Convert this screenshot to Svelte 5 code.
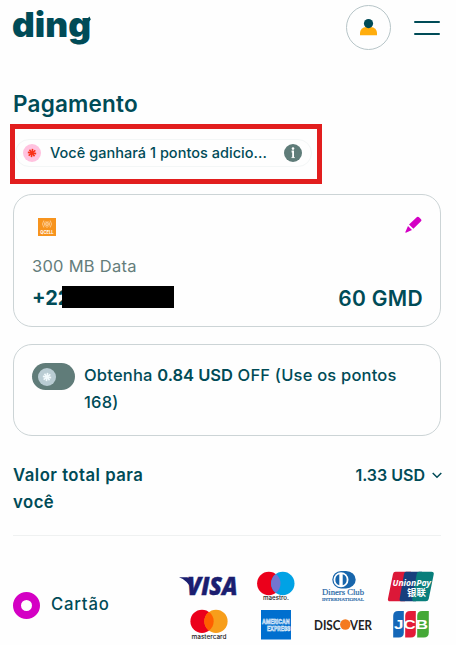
<script>
  const petals = [0, 45, 90, 135];
</script>

<main>
  <header>
    <svg class="logo" width="80" height="44" viewBox="0 0 80 44" role="img" aria-label="ding">
      <text x="-1" y="32" textLength="79" lengthAdjust="spacingAndGlyphs">ding</text>
      <path d="M71 17l5.5-5.5 1.3 3-3.3 4z" />
    </svg>
    <div class="actions">
      <button class="avatar" aria-label="Conta">
        <svg width="17" height="17" viewBox="0 0 17 17">
          <path d="M0 16.3V14a6 6 0 0 1 6-6h5a6 6 0 0 1 6 6v2.3z" fill="#ffad0d" />
          <circle cx="8.5" cy="4.6" r="4.6" fill="#004b57" />
        </svg>
      </button>
      <button class="menu" aria-label="Menu"><i></i><i></i></button>
    </div>
  </header>

  <h1>Pagamento</h1>

  <section class="highlight">
    <div class="pill">
      <svg width="18" height="18" viewBox="-9 -9 18 18">
        <circle r="9" fill="#ffc2df" />
        {#each petals as a}
          <path d="M0-4.2V4.2" stroke="#f83218" stroke-width="1.6" transform="rotate({a + 8})" />
        {/each}
      </svg>
      <span class="earn">Você ganhará 1 pontos adicio...</span>
      <svg class="info" width="18" height="18" viewBox="0 0 18 18">
        <circle cx="9" cy="9" r="9" fill="#5f7c79" />
        <circle cx="9" cy="4.6" r="1.3" fill="#fff" />
        <path d="M7.6 7.5H9.1V13.8" fill="none" stroke="#fff" stroke-width="1.8" />
        <path d="M7.4 13.6h3.5" stroke="#fff" stroke-width=".8" />
      </svg>
    </div>
  </section>

  <section class="card order">
    <div class="row top">
      <svg class="operator" width="18" height="18" viewBox="0 0 18 18">
        <rect width="18" height="18" fill="#f7941e" />
        <g fill="none" stroke="#ffd3a0" stroke-width=".8">
          <circle cx="9" cy="6" r="1.5" />
          <path d="M5.8 2.5q-2.6 3.5 0 7M12.2 2.5q2.6 3.5 0 7M7.3 3.3q-1.8 2.7 0 5.4M10.7 3.3q1.8 2.7 0 5.4M9 3v7" />
        </g>
        <text x="2.3" y="16.3" textLength="13.4" lengthAdjust="spacingAndGlyphs">QCELL</text>
      </svg>
      <svg width="17" height="18" viewBox="0 0 17 18" fill="#d400c4">
        <path d="M12 1.1q1-.9 2 .1l2 2q1 1 0 2L8.4 12.7 4 8.5z" />
        <path d="M3 9.9l4 4L.9 16.8Q.2 17 .4 16z" />
      </svg>
    </div>
    <p class="plan">300 MB Data</p>
    <div class="row amount">
      <span class="phone">+22<b></b></span>
      <span class="price">60 GMD</span>
    </div>
  </section>

  <section class="card points">
    <button class="toggle" aria-label="Usar pontos">
      <svg width="18" height="18" viewBox="-9 -9 18 18">
        <circle r="9" fill="#b9ccd3" />
        {#each petals as a}
          <path d="M0-4.2V4.2" stroke="#f2fafc" stroke-width="1.6" transform="rotate({a + 8})" />
        {/each}
      </svg>
    </button>
    <p>Obtenha <strong>0.84 USD</strong> OFF (Use os pontos 168)</p>
  </section>

  <section class="total">
    <span class="label">Valor total para você</span>
    <span class="sum">1.33 USD
      <svg width="10" height="7" viewBox="0 0 10 7"><path d="M.7 1l4.3 4.2L9.3 1" fill="none" stroke="#004b57" stroke-width="1.5" /></svg>
    </span>
  </section>

  <section class="method">
    <span class="radio"></span>
    <span class="name">Cartão</span>
    <div class="brands">
      <svg width="60" height="34" viewBox="0 0 60 34" role="img" aria-label="Visa">
        <text class="visa" x="8" y="25.2" textLength="50.5" lengthAdjust="spacingAndGlyphs">VISA</text>
        <path d="M0 7.3h8q2.3 0 2.7 2l2.4 10.7Q8 10 0 7.3z" fill="#1b1e70" />
      </svg>
      <svg width="40" height="34" viewBox="0 0 40 34" role="img" aria-label="Maestro">
        <circle cx="12.8" cy="13.5" r="11.7" fill="#eb001b" />
        <circle cx="26.8" cy="13.5" r="11.7" fill="#00a2e5" />
        <path d="M19.8 4.1a11.7 11.7 0 0 1 0 18.8 11.7 11.7 0 0 1 0-18.8z" fill="#7375cf" />
        <text class="mc" x="7" y="30.3" textLength="26" lengthAdjust="spacingAndGlyphs">maestro.</text>
      </svg>
      <svg width="44" height="34" viewBox="0 0 44 34" role="img" aria-label="Diners Club">
        <path d="M20 1h5a9.7 8.7 0 0 1 0 17.4h-5A8.7 8.7 0 0 1 20 1z" fill="#1765ab" />
        <circle cx="20" cy="9.7" r="7.5" fill="#fff" />
        <path d="M18.3 4.2a5.8 5.8 0 0 0 0 11zM21.7 4.2a5.8 5.8 0 0 1 0 11z" fill="#1765ab" />
        <text class="diners" x="1" y="25.4" textLength="42" lengthAdjust="spacingAndGlyphs">Diners Club</text>
        <text class="intl" x="1" y="30.8" textLength="42" lengthAdjust="spacingAndGlyphs">INTERNATIONAL</text>
      </svg>
      <svg width="48" height="34" viewBox="0 0 48 34" role="img" aria-label="UnionPay">
        <path d="M8.5 1.7H24L18 31.2H3Q.3 31.2 1 28.4L6 4q.5-2.3 2.5-2.3z" fill="#dc1838" />
        <path d="M19 1.7h16L29 31.2H14.5q-2.3 0-1.8-2.8L17 4q.5-2.3 2-2.3z" fill="#173f7d" />
        <path d="M32 1.7h12.5q2.8 0 2.2 2.8l-5 24.4q-.5 2.3-3 2.3H27q-2.3 0-1.8-2.8L29.7 4q.5-2.3 2.3-2.3z" fill="#087e7b" />
        <text class="union" x="5.5" y="16" textLength="38.5" lengthAdjust="spacingAndGlyphs">UnionPay</text>
        <text class="cjk" x="20" y="26.2" textLength="19" lengthAdjust="spacingAndGlyphs">银联</text>
      </svg>
      <svg width="40" height="34" viewBox="0 0 40 34" role="img" aria-label="Mastercard">
        <circle cx="13" cy="13.3" r="11.6" fill="#eb001b" />
        <circle cx="27" cy="13.3" r="11.6" fill="#f79e1b" />
        <path d="M20 4a11.6 11.6 0 0 1 0 18.6A11.6 11.6 0 0 1 20 4z" fill="#ff5f00" />
        <text class="mc" x="2.5" y="30.8" textLength="35" lengthAdjust="spacingAndGlyphs">mastercard</text>
      </svg>
      <svg width="30" height="34" viewBox="0 0 30 34" role="img" aria-label="American Express">
        <rect y="2" width="30" height="29.5" fill="#006fcf" />
        <text class="amex" x="1" y="16" textLength="27.5" lengthAdjust="spacingAndGlyphs">AMERICAN</text>
        <text class="amex" x="6" y="23" textLength="23.5" lengthAdjust="spacingAndGlyphs">EXPRESS</text>
      </svg>
      <svg width="60" height="34" viewBox="0 0 60 34" role="img" aria-label="Discover">
        <text class="disc" x="1" y="21.5" textLength="26.5" lengthAdjust="spacingAndGlyphs">DISC</text>
        <circle cx="32.3" cy="16.5" r="5.2" fill="#f47b20" />
        <text class="disc" x="37" y="21.5" textLength="22" lengthAdjust="spacingAndGlyphs">VER</text>
      </svg>
      <svg width="38" height="34" viewBox="0 0 38 34" role="img" aria-label="JCB">
        <path d="M6.2 3h5.6v21.5q0 5-5 5H1.2V8q0-5 5-5z" fill="#1467b8" />
        <path d="M18.2 3h5.6v21.5q0 5-5 5h-5.6V8q0-5 5-5z" fill="#e31b38" />
        <path d="M30.2 3h6.6v21.5q0 5-5 5h-6.6V8q0-5 5-5z" fill="#45a837" />
        <text class="jcb" x="2" y="20.6" textLength="34" lengthAdjust="spacingAndGlyphs">JCB</text>
      </svg>
    </div>
  </section>
</main>

<style>
  main {
    box-sizing: border-box;
    width: 456px;
    height: 645px;
    overflow: hidden;
    padding: 5px 15px 0 13px;
    background: #fefefe;
    color: #004b57;
    font-family: Inter, "Noto Sans", sans-serif;
    font-size: 16px;
    line-height: 27px;
  }
  p, h1 { margin: 0; }
  svg { display: block; flex: none; overflow: visible; }
  button { padding: 0; border: 0; background: none; }
  header { display: flex; justify-content: space-between; height: 45px; }
  .logo { fill: #004b57; font-weight: 900; font-size: 34px; }
  .actions { display: flex; align-items: center; gap: 23px; }
  .avatar {
    box-sizing: border-box;
    display: grid;
    place-items: center;
    width: 45px;
    height: 45px;
    border: 1px solid #b7c5c8;
    border-radius: 50%;
  }
  .menu { display: flex; flex-direction: column; gap: 10px; width: 26px; margin-right: 1px; }
  .menu i { height: 2px; border-radius: 1px; background: #004b57; }
  h1 { margin-top: 40px; font-size: 22.5px; font-weight: 600; letter-spacing: 0.2px; }
  .highlight {
    box-sizing: border-box;
    width: 312px;
    height: 60px;
    margin: 7px 0 0 -3px;
    padding: 10px 0 0;
    border: 5.5px solid #e21e1e;
  }
  .pill {
    box-sizing: border-box;
    display: flex;
    align-items: center;
    width: 297px;
    height: 28px;
    padding: 0 9px 0 7px;
    border: 1px solid #f3f6f6;
    border-radius: 14px;
  }
  .earn { margin: -1px 0 0 9px; font-size: 14.5px; font-weight: 500; letter-spacing: 0.03px; white-space: nowrap; }
  .info { margin-left: auto; }
  .card { box-sizing: border-box; width: 428px; border: 1px solid #ccd4d6; border-radius: 19px; }
  .row { display: flex; justify-content: space-between; }
  .order { height: 133px; margin-top: 10px; padding: 21px 18px 0; }
  .top { padding-left: 6px; }
  .operator { margin-top: 2px; }
  .operator text { fill: #fff; font-size: 5px; font-weight: 700; }
  .plan { margin-top: 17px; color: #647d7b; font-size: 16.5px; letter-spacing: 0.25px; }
  .amount { margin-top: 5px; font-size: 20px; font-weight: 600; }
  .phone { display: flex; align-items: center; font-weight: 700; }
  .phone b { width: 112px; height: 22px; margin: -3px 0 0 -8px; background: #000; }
  .price { margin-right: -1px; font-size: 21px; letter-spacing: 0.3px; }
  .points { display: flex; gap: 9px; height: 92px; margin-top: 17px; padding: 18px 18px 0; }
  .toggle { display: flex; align-items: center; flex: none; width: 43px; height: 27px; padding-left: 6px; border-radius: 14px; background: #607c79; }
  .points p { width: 330px; margin-top: -1px; font-size: 16.5px; font-weight: 500; letter-spacing: 0.2px; }
  .points strong { font-weight: 600; letter-spacing: 0; }
  .total { display: flex; justify-content: space-between; height: 73px; margin-top: 26px; border-bottom: 1px solid #eff1f1; font-weight: 600; }
  .label { width: 150px; font-size: 16.7px; letter-spacing: 0.5px; }
  .sum { display: flex; align-items: center; gap: 7px; height: 27px; margin-right: -1px; }
  .method { display: flex; align-items: center; padding-top: 34px; }
  .radio { box-sizing: border-box; width: 27px; height: 27px; margin-top: -2px; border: 8px solid #d400c4; border-radius: 50%; }
  .name { margin: -4px 0 0 11px; font-size: 16.7px; font-weight: 500; letter-spacing: 0.8px; }
  .brands {
    display: grid;
    grid-template-columns: 62px 72px 62px 74px;
    grid-template-rows: 34px 34px;
    gap: 4px 0;
    justify-items: center;
    margin: 0 -7px 0 auto;
  }
  .visa { fill: #1b1e70; stroke: #1b1e70; stroke-width: 0.5px; font: italic 800 25px "Open Sans", sans-serif; }
  .mc { fill: #222; font: 500 6.5px Inter, sans-serif; }
  .diners { fill: #2466a5; stroke: #2466a5; stroke-width: 0.2px; font: 8.5px "Liberation Serif", serif; }
  .intl { fill: #2466a5; stroke: #2466a5; stroke-width: 0.2px; font: 5px "Liberation Serif", serif; }
  .union { fill: #fff; font: italic 700 9px "Open Sans", sans-serif; }
  .cjk { fill: #fff; font: 700 9.5px "Noto Sans CJK SC", sans-serif; }
  .amex { fill: #006fcf; stroke: #fff; stroke-width: 0.55px; font: 700 6.5px Inter, sans-serif; }
  .disc { fill: #222; font: 700 13.5px Lato, sans-serif; }
  .jcb { fill: #fff; font: 700 12px "Liberation Sans", sans-serif; }
</style>
